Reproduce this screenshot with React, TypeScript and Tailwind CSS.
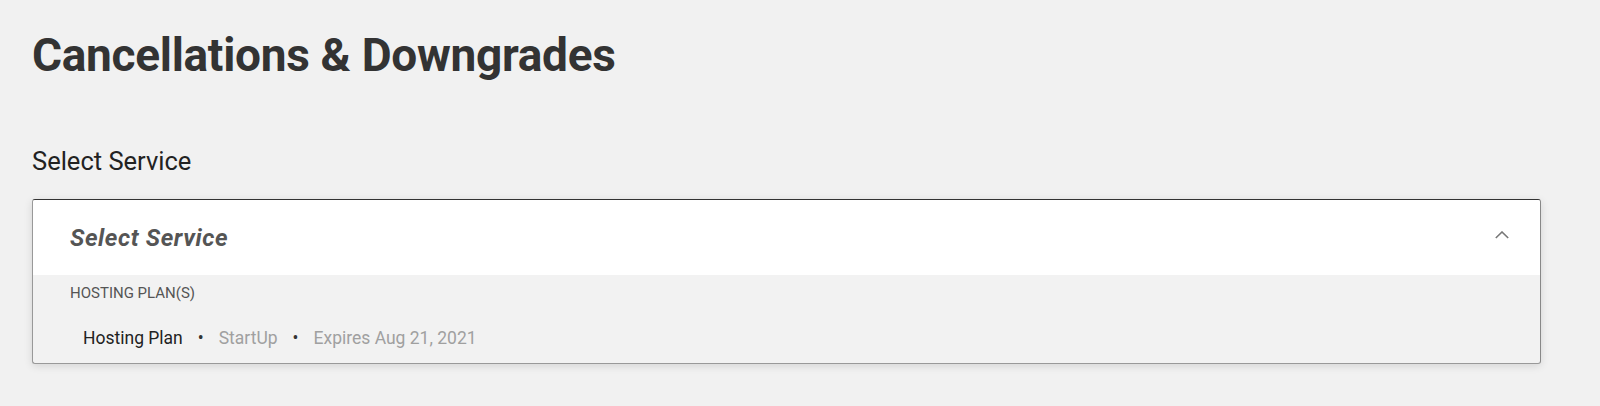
export default function App() {
  return (
    <div
      className="min-h-[406px] bg-[#f1f1f1] px-8 pt-[27px] text-[#333]"
      style={{ fontFamily: "Roboto, 'Liberation Sans', sans-serif" }}
    >
      <h1 className="text-[46px] font-bold leading-[56px] tracking-[-0.3px] text-[#333]">
        Cancellations &amp; Downgrades
      </h1>

      <h2 className="mt-[63px] text-[25.5px] leading-[30px] text-[#222]">
        Select Service
      </h2>

      <div className="mt-[23px] w-[1509px] overflow-hidden rounded-[3px] border border-[#999] border-t-[#333] border-r-[#888] bg-[#f2f2f2] shadow-[0_2px_8px_rgba(0,0,0,0.12)]">
        <button className="flex h-[75px] w-full cursor-pointer items-center justify-between bg-white pl-[37px] pr-[31px]">
          <span className="text-[24px] font-bold italic tracking-[0.6px] text-[#555]">Select Service</span>
          <svg width="14" height="8" viewBox="0 0 14 8" fill="none" className="mb-[6px] text-[#777]">
            <path d="M0.8 7 L7 1 L13.2 7" stroke="currentColor" strokeWidth="1.6" />
          </svg>
        </button>
        <div className="pt-[9px] pb-[14px]">
          <div className="pl-[37px] text-[15px] uppercase leading-[18px] text-[#555]">
            Hosting Plan(s)
          </div>
          <div className="mt-[25px] flex items-center pl-[50px] text-[17.5px] leading-[22px]">
            <span className="text-[#222]">Hosting Plan</span>
            <span className="mx-[15px] text-[#333]">•</span>
            <span className="text-[#a0a0a0]">StartUp</span>
            <span className="mx-[15px] text-[#333]">•</span>
            <span className="text-[#a0a0a0]">Expires Aug 21, 2021</span>
          </div>
        </div>
      </div>
    </div>
  );
}
